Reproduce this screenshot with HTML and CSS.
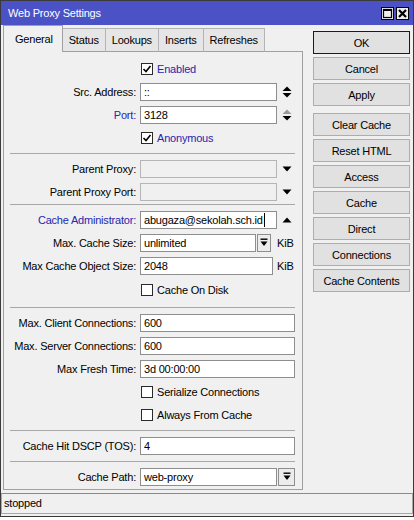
FILE: index.html
```html
<!DOCTYPE html>
<html>
<head>
<meta charset="utf-8">
<title>Web Proxy Settings</title>
<link rel="stylesheet" href="styles.css">
</head>
<body>
<div class="window">
  <div class="titlebar">
    <span class="title">Web Proxy Settings</span>
    <div class="wincontrols">
      <span class="wbtn"><svg width="11" height="11" viewBox="0 0 11 11"><rect x="1.5" y="1.5" width="8" height="8" fill="none" stroke="#000" stroke-width="1.2"/><rect x="1" y="1" width="9" height="2" fill="#000"/></svg></span>
      <span class="wbtn"><svg width="11" height="11" viewBox="0 0 11 11"><path d="M2 2 L9 9 M9 2 L2 9" stroke="#000" stroke-width="2.2" fill="none"/></svg></span>
    </div>
  </div>

  <div class="main">
    <div class="tabarea">
      <div class="tabs">
        <div class="tab active">General</div>
        <div class="tab">Status</div>
        <div class="tab">Lookups</div>
        <div class="tab">Inserts</div>
        <div class="tab">Refreshes</div>
        <div class="tabfill"></div>
      </div>
      <div class="panel">
        <div class="row">
          <span class="lbl"></span>
          <span class="cb"><svg width="10" height="10" viewBox="0 0 10 10"><path d="M1.5 5 L4 7.5 L8.5 2" stroke="#000" stroke-width="1.6" fill="none"/></svg></span>
          <span class="cbl blue">Enabled</span>
        </div>
        <div class="row">
          <span class="lbl">Src. Address:</span>
          <span class="fld fld-arrow">::</span>
          <svg class="spin" width="10" height="12" viewBox="0 0 10 12"><path d="M5 0.5 L9.5 5 H0.5 Z" fill="#000"/><path d="M0.5 7 H9.5 L5 11.5 Z" fill="#000"/></svg>
        </div>
        <div class="row">
          <span class="lbl blue">Port:</span>
          <span class="fld fld-arrow">3128</span>
          <svg class="spin" width="10" height="12" viewBox="0 0 10 12"><path d="M5 0.5 L9.5 5 H0.5 Z" fill="#9a9a9a"/><path d="M0.5 7 H9.5 L5 11.5 Z" fill="#000"/></svg>
        </div>
        <div class="row">
          <span class="lbl"></span>
          <span class="cb"><svg width="10" height="10" viewBox="0 0 10 10"><path d="M1.5 5 L4 7.5 L8.5 2" stroke="#000" stroke-width="1.6" fill="none"/></svg></span>
          <span class="cbl blue">Anonymous</span>
        </div>

        <div class="sep"></div>

        <div class="row">
          <span class="lbl">Parent Proxy:</span>
          <span class="fld fld-arrow disabled"></span>
          <svg class="spin" width="10" height="12" viewBox="0 0 10 12"><path d="M0.5 3.5 H9.5 L5 8.5 Z" fill="#000"/></svg>
        </div>
        <div class="row">
          <span class="lbl">Parent Proxy Port:</span>
          <span class="fld fld-arrow disabled"></span>
          <svg class="spin" width="10" height="12" viewBox="0 0 10 12"><path d="M0.5 3.5 H9.5 L5 8.5 Z" fill="#000"/></svg>
        </div>

        <div class="sep sep-tight"></div>

        <div class="row">
          <span class="lbl blue">Cache Administrator:</span>
          <span class="fld fld-arrow">abugaza@sekolah.sch.id<span class="caret"></span></span>
          <svg class="spin" width="10" height="12" viewBox="0 0 10 12"><path d="M5 3.5 L9.5 8.5 H0.5 Z" fill="#000"/></svg>
        </div>
        <div class="row">
          <span class="lbl">Max. Cache Size:</span>
          <span class="fld fld-unit">unlimited</span>
          <span class="ddbtn"><svg width="8" height="9" viewBox="0 0 8 9"><rect x="0.5" y="0.5" width="7" height="1.4" fill="#000"/><path d="M0.5 3.5 H7.5 L4 8 Z" fill="#000"/></svg></span>
          <span class="unit">KiB</span>
        </div>
        <div class="row">
          <span class="lbl">Max Cache Object Size:</span>
          <span class="fld fld-obj">2048</span>
          <span class="unit unit-near">KiB</span>
        </div>
        <div class="row row-tall">
          <span class="lbl"></span>
          <span class="cb"></span>
          <span class="cbl">Cache On Disk</span>
        </div>

        <div class="sep"></div>

        <div class="row">
          <span class="lbl">Max. Client Connections:</span>
          <span class="fld fld-wide">600</span>
        </div>
        <div class="row">
          <span class="lbl">Max. Server Connections:</span>
          <span class="fld fld-wide">600</span>
        </div>
        <div class="row">
          <span class="lbl">Max Fresh Time:</span>
          <span class="fld fld-wide">3d 00:00:00</span>
        </div>
        <div class="row">
          <span class="lbl"></span>
          <span class="cb"></span>
          <span class="cbl">Serialize Connections</span>
        </div>
        <div class="row">
          <span class="lbl"></span>
          <span class="cb"></span>
          <span class="cbl">Always From Cache</span>
        </div>

        <div class="sep"></div>

        <div class="row">
          <span class="lbl">Cache Hit DSCP (TOS):</span>
          <span class="fld fld-wide">4</span>
        </div>

        <div class="sep"></div>

        <div class="row">
          <span class="lbl">Cache Path:</span>
          <span class="fld fld-arrow">web-proxy</span>
          <span class="ddbtn ddbtn-wide"><svg width="8" height="9" viewBox="0 0 8 9"><rect x="0.5" y="0.5" width="7" height="1.4" fill="#000"/><path d="M0.5 3.5 H7.5 L4 8 Z" fill="#000"/></svg></span>
        </div>
      </div>
    </div>

    <div class="buttons">
      <button class="btn btn-default">OK</button>
      <button class="btn">Cancel</button>
      <button class="btn">Apply</button>
      <button class="btn btn-group">Clear Cache</button>
      <button class="btn">Reset HTML</button>
      <button class="btn">Access</button>
      <button class="btn">Cache</button>
      <button class="btn">Direct</button>
      <button class="btn">Connections</button>
      <button class="btn">Cache Contents</button>
    </div>
  </div>

  <div class="status">stopped</div>
</div>
</body>
</html>
```

FILE: styles.css
```css
* {
  box-sizing: border-box;
}

html, body {
  margin: 0;
  padding: 0;
  background: #ffffff;
}

body {
  font-family: "Liberation Sans", Arial, sans-serif;
  font-size: 11px;
  letter-spacing: -0.2px;
  color: #000;
}

.window {
  width: 414px;
  height: 517px;
  border: 1px solid #3a3a3a;
  background: #f0f0f0;
  display: flex;
  flex-direction: column;
}

/* Title bar */
.titlebar {
  height: 24px;
  flex: none;
  background: #4b52c6;
  color: #fff;
  display: flex;
  align-items: center;
  justify-content: space-between;
  padding: 0 4px 0 7px;
}

.title {
  font-size: 11px;
  letter-spacing: -0.2px;
}

.wincontrols {
  display: flex;
  gap: 2px;
}

.wbtn {
  width: 13px;
  height: 13px;
  background: #eeeeee;
  border: 1px solid #000;
  display: flex;
  align-items: center;
  justify-content: center;
}

/* Main */
.main {
  display: flex;
  padding-left: 2px;
}

.tabarea {
  width: 300px;
  display: flex;
  flex-direction: column;
}

.tabs {
  display: flex;
  height: 27px;
}

.tab {
  margin-top: 3px;
  height: 24px;
  padding: 0 6px;
  line-height: 22px;
  background: #e6e6e6;
  border-top: 1px solid #b4b4b4;
  border-right: 1px solid #b4b4b4;
  border-bottom: 1px solid #a0a0a0;
  white-space: nowrap;
}

.tab.active {
  margin-top: 0;
  height: 27px;
  padding: 0 9px 0 11px;
  line-height: 26px;
  background: #f0f0f0;
  border-left: 1px solid #a0a0a0;
  border-top: 1px solid #a0a0a0;
  border-right: 1px solid #a0a0a0;
  border-bottom: none;
}

.tabfill {
  flex: 1;
  border-bottom: 1px solid #a0a0a0;
}

.panel {
  border: 1px solid #a0a0a0;
  border-top: none;
  padding: 5px 0 1px 0;
}

.row {
  display: flex;
  align-items: center;
  height: 23px;
}

.row-tall {
  height: 26px;
}

.lbl {
  width: 132px;
  margin-right: 4px;
  text-align: right;
  white-space: nowrap;
  flex: none;
}

.blue {
  color: #2626b0;
}

.fld {
  height: 18px;
  border: 1px solid #8e8e8e;
  background: #fff;
  padding: 0 3px;
  line-height: 16px;
  white-space: nowrap;
  overflow: hidden;
  flex: none;
}

.fld.disabled {
  background: #f0f0f0;
  border-color: #b5b5b5;
}

.fld-arrow { width: 137px; }
.fld-wide { width: 155px; }
.fld-unit { width: 116px; }
.fld-obj { width: 133px; }

.caret {
  display: inline-block;
  width: 1px;
  height: 14px;
  margin-left: 1px;
  background: #000;
  vertical-align: -3px;
}

.spin {
  margin-left: 5px;
  flex: none;
}

.ddbtn {
  width: 14px;
  height: 18px;
  margin-left: 1px;
  border: 1px solid #8e8e8e;
  background: #ececec;
  display: flex;
  align-items: center;
  justify-content: center;
  flex: none;
}

.ddbtn-wide {
  width: 17px;
}

.unit {
  margin-left: 6px;
}

.unit-near {
  margin-left: 4px;
}

.cb {
  width: 12px;
  height: 12px;
  margin-left: 1px;
  border: 1px solid #2a2a2a;
  background: #fff;
  display: flex;
  align-items: center;
  justify-content: center;
  flex: none;
}

.cbl {
  margin-left: 4px;
  white-space: nowrap;
}

.sep {
  height: 1px;
  background: #a8a8a8;
  margin: 4px 7px 3px 6px;
}

.sep-tight {
  margin-top: 1px;
}

/* Buttons */
.buttons {
  width: 97px;
  margin-left: 10px;
  margin-top: 6px;
  display: flex;
  flex-direction: column;
  gap: 3px;
}

.btn {
  height: 23px;
  padding: 0;
  background: #e1e1e1;
  border: 1px solid #adadad;
  font-family: "Liberation Sans", Arial, sans-serif;
  font-size: 11px;
  letter-spacing: -0.2px;
  color: #000;
  text-align: center;
}

.btn-default {
  border: 1px solid #1a1a1a;
}

.btn-group {
  margin-top: 4px;
}

/* Status */
.status {
  margin-top: 3px;
  height: 21px;
  border: 1px solid #a8a8a8;
  border-top-color: #8a8a8a;
  padding-left: 2px;
  line-height: 19px;
}
```
